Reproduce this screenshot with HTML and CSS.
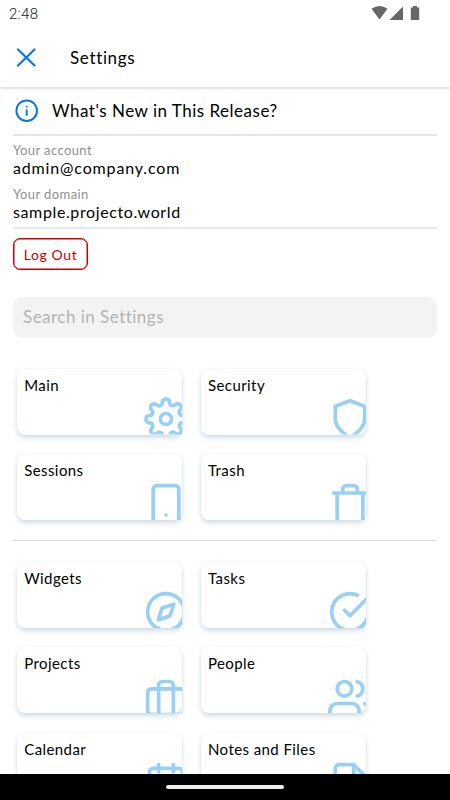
FILE: index.html
```html
<!DOCTYPE html>
<html lang="en">
<head>
<meta charset="utf-8">
<title>Settings</title>
<link rel="stylesheet" href="styles.css">
</head>
<body>
<div class="screen">
  <header class="top">
    <div class="status">
      <span class="time">2:48</span>
      <svg class="status-icons" width="50" height="16" viewBox="0 0 50 16">
        <path d="M.5 3.800Q8.500-1.800 16.500 3.800L8.500 14.500z"/>
        <path d="M18.500 15L32 1.500V15z"/>
        <path d="M42 1h4v1.500h2.200V15h-8.400V2.500H42z"/>
      </svg>
    </div>
    <div class="bar">
      <svg class="close" width="20" height="20" viewBox="0 0 20 20"><path d="M2 1.500l16.500 16M18.500 1.500L2 17.500"/></svg>
      <h1 class="title">Settings</h1>
    </div>
  </header>
  <main class="content">
    <a class="news">
      <svg class="info" width="24" height="24" viewBox="0 0 24 24"><circle cx="11.700" cy="11.700" r="10.300"/><path d="M11.700 11.200v4.700M11.700 7.700v.1"/></svg>
      <span class="news-text">What's New in This Release?</span>
    </a>
    <section class="account">
      <div class="label">Your account</div>
      <div class="value email">admin@company.com</div>
      <div class="label second">Your domain</div>
      <div class="value domain">sample.projecto.world</div>
    </section>
    <button class="logout">Log Out</button>
    <div class="search">Search in Settings</div>
    <section class="cards">
      <div class="card"><span>Main</span><svg class="icon" viewBox="0 0 24 24"><circle cx="12" cy="12" r="3"/><path d="M19.400 15a1.650 1.650 0 0 0 .33 1.820l.06.06a2 2 0 0 1 0 2.830 2 2 0 0 1-2.830 0l-.06-.06a1.650 1.650 0 0 0-1.820-.33 1.650 1.650 0 0 0-1 1.510V21a2 2 0 0 1-2 2 2 2 0 0 1-2-2v-.09A1.650 1.650 0 0 0 9 19.400a1.650 1.650 0 0 0-1.820.33l-.06.06a2 2 0 0 1-2.830 0 2 2 0 0 1 0-2.830l.06-.06a1.650 1.650 0 0 0 .33-1.820 1.650 1.650 0 0 0-1.510-1H3a2 2 0 0 1-2-2 2 2 0 0 1 2-2h.09A1.650 1.650 0 0 0 4.600 9a1.650 1.650 0 0 0-.33-1.820l-.06-.06a2 2 0 0 1 0-2.830 2 2 0 0 1 2.830 0l.06.06a1.650 1.650 0 0 0 1.820.33H9a1.650 1.650 0 0 0 1-1.510V3a2 2 0 0 1 2-2 2 2 0 0 1 2 2v.09a1.650 1.650 0 0 0 1 1.510 1.650 1.650 0 0 0 1.820-.33l.06-.06a2 2 0 0 1 2.830 0 2 2 0 0 1 0 2.830l-.06.06a1.650 1.650 0 0 0-.33 1.820V9a1.650 1.650 0 0 0 1.510 1H21a2 2 0 0 1 2 2 2 2 0 0 1-2 2h-.09a1.650 1.650 0 0 0-1.510 1z"/></svg></div>
      <div class="card"><span>Security</span><svg class="icon miter" viewBox="0 0 24 24"><path d="M12 22s8-4 8-10V5l-8-3-8 3v7c0 6 8 10 8 10z"/></svg></div>
      <div class="card"><span>Sessions</span><svg class="icon" viewBox="0 0 24 24"><rect x="5" y="2" width="14" height="20" rx="2"/><path d="M12 18h.01"/></svg></div>
      <div class="card"><span>Trash</span><svg class="icon" viewBox="0 0 24 24"><path d="M3 6h18M19 6v14a2 2 0 0 1-2 2H7a2 2 0 0 1-2-2V6M8 6V4a2 2 0 0 1 2-2h4a2 2 0 0 1 2 2v2"/></svg></div>
    </section>
    <section class="cards more">
      <div class="card"><span>Widgets</span><svg class="icon" viewBox="0 0 24 24"><circle cx="12" cy="12" r="10"/><path d="M16.240 7.760l-2.120 6.360-6.360 2.120 2.120-6.360z"/></svg></div>
      <div class="card"><span>Tasks</span><svg class="icon" viewBox="0 0 24 24"><path d="M22 11.080V12a10 10 0 1 1-5.930-9.140M22 4L12 14.010l-3-3"/></svg></div>
      <div class="card"><span>Projects</span><svg class="icon" viewBox="0 0 24 24"><rect x="2" y="7" width="20" height="14" rx="2"/><path d="M16 21V5a2 2 0 0 0-2-2h-4a2 2 0 0 0-2 2v16"/></svg></div>
      <div class="card"><span>People</span><svg class="icon" viewBox="0 0 24 24"><path d="M17 21v-2a4 4 0 0 0-4-4H5a4 4 0 0 0-4 4v2M23 21v-2a4 4 0 0 0-3-3.870M16 3.130a4 4 0 0 1 0 7.750"/><circle cx="9" cy="7" r="4"/></svg></div>
      <div class="card"><span>Calendar</span><svg class="icon" viewBox="0 0 24 24"><rect x="3" y="4" width="18" height="18" rx="2"/><path d="M16 2v4M8 2v4M3 10h18"/></svg></div>
      <div class="card"><span>Notes and Files</span><svg class="icon" viewBox="0 0 24 24"><path d="M14 2H6a2 2 0 0 0-2 2v16a2 2 0 0 0 2 2h12a2 2 0 0 0 2-2V8z"/><path d="M14 2v6h6"/></svg></div>
    </section>
  </main>
  <footer class="nav"><div class="handle"></div></footer>
</div>
</body>
</html>
```
FILE: styles.css
```css
* { box-sizing: border-box; }
body { margin: 0; font-family: Lato, "Liberation Sans", sans-serif; color: #000; background: #fff; }
.screen { width: 450px; height: 800px; display: flex; flex-direction: column; overflow: hidden; }
.top { flex: none; height: 87px; background: #fff; box-shadow: 0 2px 0 rgba(0,0,0,.06), 0 3px 4px rgba(0,0,0,.05); z-index: 1; }
.status { height: 28px; padding: 5px 29px 0 9px; display: flex; justify-content: space-between; }
.time { font: 300 15px/19px Roboto, sans-serif; color: #222; letter-spacing: .3px; }
.status-icons { fill: #666; }
.bar { height: 59px; padding: 0 16px; display: flex; align-items: center; }
.close { fill: none; stroke: #0878df; stroke-width: 2.2; stroke-linecap: round; }
.title { margin: 0 0 0 34px; font-size: 17px; line-height: 24px; font-weight: 400; letter-spacing: .65px; }
.content { flex: 1; min-height: 0; overflow: hidden; padding: 0 13px; }
.news { height: 49px; border-bottom: 2px solid #e5e5e5; display: flex; align-items: center; padding-left: 2px; }
.info { fill: none; stroke: #0878df; stroke-width: 2; stroke-linecap: round; }
.news-text { margin-left: 13px; font-size: 17px; line-height: 20px; padding-top: 1px; letter-spacing: .5px; white-space: nowrap; }
.account { height: 93px; padding-top: 6px; border-bottom: 2px solid #e9e9e9; }
.label { font-size: 13px; line-height: 16px; color: #909090; letter-spacing: .4px; }
.label.second { margin-top: 8px; }
.value { font-size: 16px; line-height: 20px; }
.email { letter-spacing: .85px; }
.domain { letter-spacing: .62px; }
.logout { display: block; margin: 9px 0 0; width: 75px; height: 32px; padding: 0; border: 1.5px solid #c90000; border-radius: 7px; background: #fff; color: #c90000; font: 14px/29px Lato, sans-serif; letter-spacing: .6px; box-shadow: inset 0 0 0 .5px #c90000; }
.search { margin-top: 26.500px; height: 41.500px; border-radius: 9px; background: #f3f3f3; padding-left: 10px; font-size: 17px; line-height: 40px; color: #b3b3b3; letter-spacing: .48px; }
.cards { display: grid; grid-template-columns: 165px 165px; grid-auto-rows: 66px; gap: 19.400px 18.800px; padding: 30.500px 0 20.500px 4.200px; }
.more { border-top: 1px solid #dfdfdf; padding-top: 20.500px; }
.card { position: relative; border-radius: 8px; background: #fff; box-shadow: 0 3px 5px rgba(70,120,155,.24), 0 0 2px rgba(70,120,160,.1); padding: 6px 7px; font-size: 15px; line-height: 20px; letter-spacing: .42px; white-space: nowrap; }
.card span { display: block; }
.icon { position: absolute; right: -6px; bottom: -6.500px; width: 44px; height: 44px; fill: none; stroke: #97cff5; stroke-width: 2; stroke-linecap: round; stroke-linejoin: round; clip-path: inset(0 6px 6.500px 0); }
.miter { stroke-linejoin: miter; }
.nav { flex: none; height: 26px; background: #000; display: flex; justify-content: center; align-items: center; z-index: 1; }
.handle { width: 118px; height: 4px; border-radius: 2px; background: #eee; }
```
